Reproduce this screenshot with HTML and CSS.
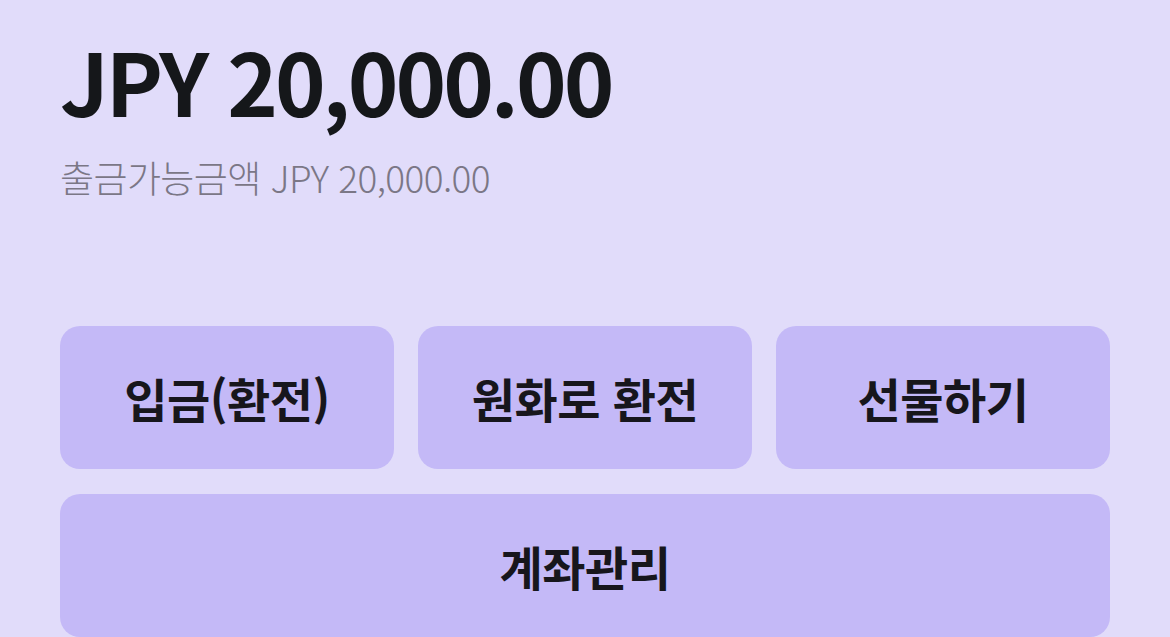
FILE: index.html
```html
<!DOCTYPE html>
<html lang="ko">
<head>
<meta charset="utf-8">
<link rel="stylesheet" href="styles.css">
</head>
<body>
<main class="page">
  <section class="balance">
    <h1 class="amount">JPY 20,000.00</h1>
    <p class="available">출금가능금액 JPY 20,000.00</p>
  </section>
  <section class="actions">
    <button class="btn">입금(환전)</button>
    <button class="btn">원화로 환전</button>
    <button class="btn">선물하기</button>
    <button class="btn btn-wide">계좌관리</button>
  </section>
</main>
</body>
</html>
```
FILE: styles.css
```css
html, body {
  margin: 0;
  padding: 0;
  background: #e1dcfa;
  height: 100%;
  overflow: hidden;
}
body {
  font-family: "Noto Sans CJK KR", "Noto Sans", sans-serif;
}
.page {
  padding: 20px 60px 0 60px;
}
.balance {
  display: flex;
  flex-direction: column;
}
.amount {
  margin: 0;
  font-size: 86px;
  font-weight: 700;
  color: #15171a;
  line-height: 120px;
  letter-spacing: -3px;
}
.available {
  margin: 0;
  padding-top: 12px;
  font-size: 37px;
  font-weight: 300;
  color: #7b7786;
  line-height: 50px;
  letter-spacing: -0.6px;
}
.actions {
  margin-top: 124px;
  display: grid;
  grid-template-columns: repeat(3, 1fr);
  gap: 25px 24px;
}
.btn {
  height: 143px;
  border: none;
  border-radius: 20px;
  background: #c4b9f7;
  color: #17161c;
  font-family: inherit;
  font-size: 47px;
  font-weight: 700;
  letter-spacing: -0.5px;
  padding: 0;
}
.btn-wide {
  grid-column: 1 / -1;
}
```
